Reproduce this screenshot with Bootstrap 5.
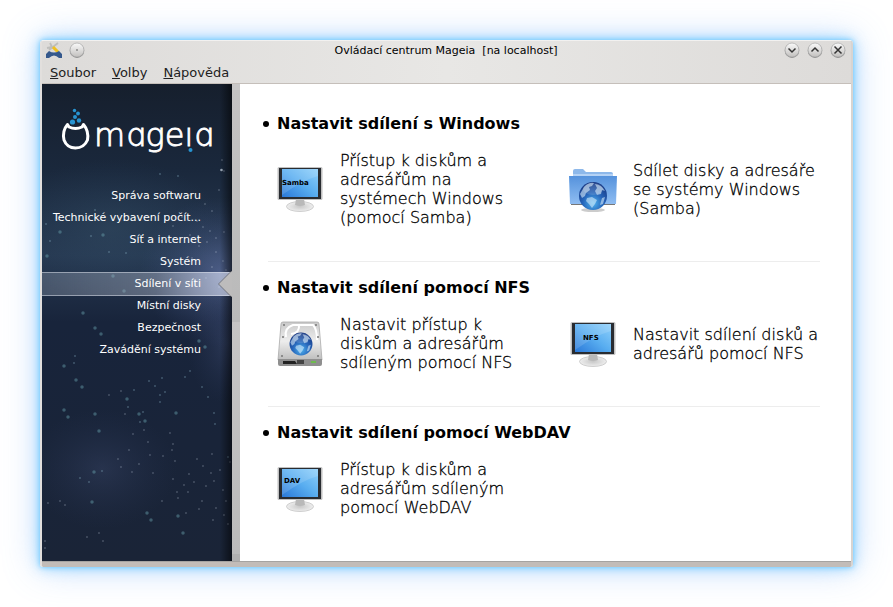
<!DOCTYPE html>
<html lang="cs">
<head>
<meta charset="utf-8">
<meta name="viewport" content="width=device-width, initial-scale=1">
<title>Ovládací centrum Mageia</title>
<link rel="stylesheet" href="https://cdn.jsdelivr.net/npm/bootstrap@5.3.0/dist/css/bootstrap.min.css">
<style>
  body { font-family: "DejaVu Sans", sans-serif; padding: 40px; color: #000; background: #fff; }
  .app-window { border-radius: 4px 4px 3px 3px; border: solid; border-width: 1px 2px 0;
    border-color: #f2f1f0 #d8d4d1 #c2bcb8 #e2dfdd;
    background: linear-gradient(#dddbd9, #e3e1df 43px, #c2bcb8);
    box-shadow: 0 0 5px #6ccaff, 0 0 14px rgba(100,195,255,.7), 0 0 36px rgba(110,170,250,.45); }
  .title-bar { height: 21px; font-size: 11px; line-height: 20px; padding: 0 5px 2px 4px; background: linear-gradient(90deg, #dddbd9, #e8e7e5 50%, #dddbd9); border-radius: 3px 3px 0 0; }
  .title-tools { width: 80px; gap: 7px; }
  .round-btn { width: 16px; height: 17px; border: 0; background: none; }
  .menu-bar { height: 22px; gap: 16px; padding: 0 8px; font-size: 13px; line-height: 20px; background: linear-gradient(90deg, #dddbd9, #e8e7e5 50%, #dddbd9); border-bottom: 1px solid #c5bfba; }
  .menu-bar button { color: #222; background: none; }
  .side-pane { width: 190px; background: #18233a; overflow: hidden; }
  .sky { z-index: 0; }
  .side-menu { padding-top: 17px; font-size: 11px; line-height: 22px; }
  .side-menu a { height: 22px; color: #fff; padding-right: 31px; }
  .side-menu a.current { height: 24px; margin: -1px 0; line-height: 22px; border: solid rgba(225,230,240,.5); border-width: 1px 0;
    background: linear-gradient(90deg, rgba(190,200,215,.25), rgba(170,178,195,.45) 60%, rgba(215,222,245,.7)); }
  .pointer { right: 0; top: -2px; }
  .logo-word { font-family: "DejaVu Sans Light", "DejaVu Sans", sans-serif; font-weight: 200; font-size: 32px; }
  .strip { width: 8px; background: linear-gradient(#c9c8c8 0 6px, #c3c2c2 6px, #bababa 238px, #c6c5c5 238px, #bababa 470px, #b0b0b0 470px); }
  .main-pane { padding: 13px 31px 0 28px; }
  .tool-group { padding: 17px 0 34px; }
  .tool-group + .tool-group { border-top: 1px solid #ededed; padding-top: 16px; }
  .tool-group h2 { font-size: 16px; line-height: 20px; font-weight: 700; margin: 0 0 17px -5px; gap: 8px; }
  .bullet { width: 6px; height: 6px; background: #000; }
  .tool-grid { display: grid; grid-template-columns: 1fr 1fr; column-gap: 42px; padding-left: 8px; }
  .tool-link { gap: 16px; color: #000; font-family: "DejaVu Sans Light", "DejaVu Sans", sans-serif; font-weight: 200; font-size: 16px; line-height: 19px; -webkit-text-stroke: .3px #000; }
  .tool-link svg { -webkit-text-stroke: 0; }
  .screen-label { font: 700 7px "DejaVu Sans", sans-serif; }
  .status-edge { height: 6px; background: #c2bcb8; border-top: 1px solid #a5a3a1; border-radius: 0 0 3px 3px; }
</style>
<script src="https://cdn.jsdelivr.net/npm/bootstrap@5.3.0/dist/js/bootstrap.bundle.min.js"></script>
</head>
<body class="min-vh-100 d-flex flex-column">
<svg width="0" height="0" class="position-absolute" aria-hidden="true">
  <defs>
    <linearGradient id="btn" x2="0" y2="1"><stop stop-color="#fafafa"/><stop offset="1" stop-color="#c2c0be"/></linearGradient>
    <linearGradient id="scr" x1="1" y1="0" x2="0" y2="1"><stop stop-color="#8fd0fb"/><stop offset=".5" stop-color="#58adf0"/><stop offset="1" stop-color="#2a78d8"/></linearGradient>
    <linearGradient id="fold" x2="0" y2="1"><stop stop-color="#5592dc"/><stop offset="1" stop-color="#8fbdf2"/></linearGradient>
    <linearGradient id="metal" x2="0" y2="1"><stop stop-color="#c9c9c9"/><stop offset=".5" stop-color="#ededed"/><stop offset="1" stop-color="#bdbdbd"/></linearGradient>
    <radialGradient id="ball" cx=".5" cy=".75" r=".75"><stop stop-color="#4fb3f0"/><stop offset=".5" stop-color="#2563b8"/><stop offset="1" stop-color="#17357f"/></radialGradient>
    <radialGradient id="foot"><stop stop-color="#c8c8c8"/><stop offset="1" stop-color="#eeeeee"/></radialGradient>
    <g id="monitor">
      <ellipse cx="24" cy="41.500" rx="13.500" ry="5" fill="url(#foot)" stroke="#c4c4c4" stroke-width=".8"/>
      <path d="M20 34h8l1 6q-5 2-10 0z" fill="#b9b9b9"/>
      <rect x="1.500" y="2" width="45" height="33" rx="1.500" fill="#c0c0c0"/>
      <rect x="3" y="3" width="42" height="31" fill="#292c31"/>
      <rect x="6" y="4" width="36" height="28" fill="url(#scr)"/>
      <path d="M42 4v7Q27 15 6 30V4z" fill="#fff" opacity=".14"/>
    </g>
    <g id="earth">
      <circle r="14" fill="url(#ball)"/>
      <path d="M-9-9Q-4-14 1-13L-1-10-4-9-3-6-7-3-8 0-11 2-13-2zM2-12Q9-11 12-5L9-6 8-2 4-1 2-5 4-8zM-6 2L-1 1 4 4 2 8-1 12-4 8-7 5zM9 2l3-1-2 7-3 1z" fill="#d5ebfa" opacity=".6"/>
      <ellipse cy="-7" rx="10" ry="6" fill="#fff" opacity=".14"/>
    </g>
    <g id="round">
      <circle cx="8" cy="8.700" r="7.200" fill="#8a8a8a"/>
      <circle cx="8" cy="8" r="7" fill="url(#btn)" stroke="#aaa" stroke-width=".7"/>
    </g>
  </defs>
</svg>

<div class="app-window flex-grow-1 d-flex flex-column">
  <header class="title-bar d-flex align-items-center justify-content-between">
    <div class="title-tools d-flex align-items-center">
      <svg width="16" height="17" viewBox="0 0 16 17" aria-hidden="true"><path d="M4 1l2 4 5 4M12 1L3 8M1 6l5-1" stroke="#bdbdbb" stroke-width="1.800" fill="none"/><path d="M7 5l5 5" stroke="#f0c020" stroke-width="3"/><path d="M0 16v-4l3-3q5 3 10 0l3 3v4h-3q-5-5-10 0z" fill="#35588c"/></svg>
      <button class="round-btn p-0 d-flex" aria-label="Nabídka okna"><svg width="16" height="17"><use href="#round"/><circle cx="8" cy="8" r=".7" fill="#333"/></svg></button>
    </div>
    <div class="text-nowrap">Ovládací centrum Mageia&nbsp; [na localhost]</div>
    <div class="title-tools d-flex justify-content-end">
      <button class="round-btn p-0 d-flex" aria-label="Minimalizovat"><svg width="16" height="17"><use href="#round"/><path d="M4.500 6.500L8 10l3.500-3.500" fill="none" stroke="#333" stroke-width="1.500"/></svg></button>
      <button class="round-btn p-0 d-flex" aria-label="Maximalizovat"><svg width="16" height="17"><use href="#round"/><path d="M4.500 9.500L8 6l3.500 3.500" fill="none" stroke="#333" stroke-width="1.500"/></svg></button>
      <button class="round-btn p-0 d-flex" aria-label="Zavřít"><svg width="16" height="17"><use href="#round"/><path d="M4.500 4.500l7 7m0-7l-7 7" fill="none" stroke="#333" stroke-width="1.500"/></svg></button>
    </div>
  </header>
  <nav class="menu-bar d-flex" aria-label="Hlavní nabídka">
    <button class="border-0 p-0"><u>S</u>oubor</button>
    <button class="border-0 p-0"><u>V</u>olby</button>
    <button class="border-0 p-0"><u>N</u>ápověda</button>
  </nav>

  <div class="flex-grow-1 d-flex">
    <aside class="side-pane flex-shrink-0 position-relative">
      <svg class="sky position-absolute top-0 start-0 w-100 h-100" viewBox="0 0 190 477" preserveAspectRatio="none" aria-hidden="true">
        <defs>
          <linearGradient id="night" x2="0" y2="1"><stop stop-color="#161f2d"/><stop offset=".18" stop-color="#1a283c"/><stop offset=".36" stop-color="#263850"/><stop offset=".5" stop-color="#18243b"/><stop offset="1" stop-color="#1a2437"/></linearGradient>
          <radialGradient id="haze"><stop stop-color="#6d7eb5" stop-opacity=".55"/><stop offset="1" stop-color="#405080" stop-opacity="0"/></radialGradient>
          <radialGradient id="mist"><stop stop-color="#3a5870" stop-opacity=".35"/><stop offset="1" stop-color="#305070" stop-opacity="0"/></radialGradient>
          <linearGradient id="edge"><stop stop-color="#000" stop-opacity="0"/><stop offset="1" stop-color="#000" stop-opacity=".55"/></linearGradient>
        </defs>
        <rect width="190" height="477" fill="url(#night)"/>
        <ellipse cx="178" cy="188" rx="80" ry="75" fill="url(#haze)"/>
        <ellipse cx="70" cy="145" rx="110" ry="70" fill="url(#mist)"/>
        <ellipse cx="60" cy="385" rx="75" ry="60" fill="url(#haze)" opacity=".3"/>
        <ellipse cx="185" cy="260" rx="40" ry="60" fill="url(#haze)" opacity=".4"/>
        <g fill="none" stroke-linecap="round">
          <path stroke="#6aa3b0" stroke-opacity=".45" stroke-width="3.500" d="M18 148h0M61 151h0M71 192h0M82 207h0M41 229h0M53 244h0M59 250h0M22 282h0M34 296h0M40 303h0M157 257h0M163 263h0M57 347h0M52 388h0M50 418h0M141 449h0M85 315h0M97 330h0M103 337h0M134 329h0M22 326h0M26 333h0M53 330h0M105 429h0M109 436h0M136 432h0M5 172h0"/>
          <path stroke="#8fb8cb" stroke-opacity=".35" stroke-width="2" d="M118 90h0M136 92h0M53 126h0M67 168h0M84 169h0M8 157h0M49 152h0M33 272h0M107 297h0M120 294h0M118 311h0M113 302h0M123 308h0M118 318h0M86 323h0M98 338h0M101 328h0M160 303h0M148 287h0M173 340h0M186 373h0M172 329h0M166 313h0M47 398h0M38 394h0M60 387h0M4 140h0M143 293h0M32 279h0M92 306h0"/>
          <path stroke="#cbd8e8" stroke-opacity=".5" stroke-width="1.400" d="M180 76h0M182 87h0M177 106h0M163 120h0M170 127h0M155 137h0M161 143h0M168 147h0M148 151h0M174 154h0M182 148h0M165 158h0M157 162h0M174 168h0M181 177h0M170 183h0M184 186h0M164 194h0M150 174h0M177 203h0M87 366h0M91 350h0M106 358h0M108 371h0M121 372h0M130 366h0M133 377h0M97 380h0M111 389h0M131 395h0M142 401h0M147 390h0M146 408h0M136 414h0M160 417h0M164 402h0M170 370h0M178 386h0M169 389h0M181 406h0M184 417h0M174 424h0M120 417h0M157 425h0M144 429h0M171 436h0M182 431h0M135 408h0M152 398h0M79 383h0M90 388h0M76 375h0M102 346h0M131 360h0M128 349h0M155 375h0M161 382h0M172 397h0M188 378h0M186 440h0M18 417h0M23 421h0M6 419h0M57 449h0M61 457h0M45 453h0M3 457h0M3 464h0M147 111h0M140 133h0M131 142h0M83 330h0M67 311h0M79 307h0"/>
          <path stroke="#d6e2ee" stroke-opacity=".7" stroke-width="2.600" d="M179.500 86h0"/>
        </g>
        <rect x="178" width="12" height="477" fill="url(#edge)"/>
      </svg>
      <div class="position-relative">
        <svg class="d-block" width="190" height="84" viewBox="0 0 190 84" role="img" aria-label="mageia">
          <path d="M25.500 40.500Q20 47 22 56 25 64 33.500 64 42 64 45.500 56 47 47 41.500 40.500L40 43Q33.500 46 27 43z" fill="none" stroke="#fff" stroke-width="3" stroke-linejoin="round"/>
          <g fill="#2794d2"><circle cx="32.500" cy="26.500" r="1.700"/><circle cx="36" cy="29.500" r="1.900"/><circle cx="33" cy="33" r="2"/><circle cx="30.500" cy="38" r="2.600"/><circle cx="37" cy="36.500" r="2.200"/><circle cx="148.500" cy="66" r="2"/></g>
          <text x="52" y="62" class="logo-word" fill="#fff" stroke="#fff" stroke-width=".9">mɑgeıɑ</text>
        </svg>
        <nav class="side-menu d-flex flex-column text-end text-nowrap" aria-label="Kategorie">
          <a class="text-decoration-none" href="#">Správa softwaru</a>
          <a class="text-decoration-none" href="#">Technické vybavení počít...</a>
          <a class="text-decoration-none" href="#">Síť a internet</a>
          <a class="text-decoration-none" href="#">Systém</a>
          <a class="text-decoration-none current position-relative" href="#" aria-current="page">Sdílení v síti<svg class="pointer position-absolute" width="15" height="26" viewBox="0 0 15 26" aria-hidden="true"><path d="M15-1L1 13l14 14" fill="#555" opacity=".6"/><path d="M15 0L2 13l13 13z" fill="#bdbcbc"/></svg></a>
          <a class="text-decoration-none" href="#">Místní disky</a>
          <a class="text-decoration-none" href="#">Bezpečnost</a>
          <a class="text-decoration-none" href="#">Zavádění systému</a>
        </nav>
      </div>
    </aside>
    <div class="strip flex-shrink-0"></div>

    <main class="main-pane flex-grow-1 bg-white">
      <section class="tool-group">
        <h2 class="d-flex align-items-center"><span class="bullet rounded-circle"></span>Nastavit sdílení s Windows</h2>
        <div class="tool-grid">
          <a href="#" class="tool-link d-flex align-items-center text-decoration-none">
            <svg class="flex-shrink-0" width="48" height="48" aria-hidden="true"><use href="#monitor"/><text class="screen-label" x="6" y="20">Samba</text></svg>
            <span>Přístup k diskům a adresářům na systémech Windows (pomocí Samba)</span></a>
          <a href="#" class="tool-link d-flex align-items-center text-decoration-none">
            <svg class="flex-shrink-0" width="48" height="48" aria-hidden="true"><ellipse cx="24" cy="45" rx="12" ry="2" fill="#ccc"/><path d="M4 14V6q0-2 2-2h8l3 3h25q2 0 2 2v5z" fill="#8db8ea"/><path d="M4 9h40v4H4z" fill="#b4d2f5"/><path d="M2 38h44v2H2z" fill="#777"/><path d="M0 11h48l-1 28H1z" fill="url(#fold)"/><use href="#earth" x="24" y="31"/></svg>
            <span>Sdílet disky a adresáře se systémy Windows (Samba)</span></a>
        </div>
      </section>
      <section class="tool-group">
        <h2 class="d-flex align-items-center"><span class="bullet rounded-circle"></span>Nastavit sdílení pomocí NFS</h2>
        <div class="tool-grid">
          <a href="#" class="tool-link d-flex align-items-center text-decoration-none">
            <svg class="flex-shrink-0" width="48" height="48" aria-hidden="true"><path d="M7 2h34q2 0 2 2l3 36H2L5 4q0-2 2-2z" fill="url(#metal)" stroke="#aaa" stroke-width=".8"/><path d="M10 17Q8 8 17 5h20q4 4 4 15M15 14q9-1 8-10" fill="none" stroke="#fff" stroke-width="2"/><path d="M2 39h44v5q0 2-2 2H4q-2 0-2-2z" fill="#8f8f8f"/><path d="M7 41h12l2 3H7z" fill="#222"/><path d="M21 40h7v4h-7z" fill="#444"/><path d="M35 42h5" stroke="#62ca38" stroke-width="1.500"/><g fill="#777"><circle cx="8" cy="5" r="1"/><circle cx="40" cy="5" r="1"/><circle cx="7" cy="17" r="1"/><circle cx="42" cy="17" r="1"/><circle cx="6" cy="36" r="1"/><circle cx="42" cy="36" r="1"/></g><use href="#earth" transform="translate(25 24) scale(.82)"/></svg>
            <span>Nastavit přístup k diskům a adresářům sdíleným pomocí NFS</span></a>
          <a href="#" class="tool-link d-flex align-items-center text-decoration-none">
            <svg class="flex-shrink-0" width="48" height="48" aria-hidden="true"><use href="#monitor"/><text class="screen-label" x="14" y="20">NFS</text></svg>
            <span>Nastavit sdílení disků a adresářů pomocí NFS</span></a>
        </div>
      </section>
      <section class="tool-group pb-0">
        <h2 class="d-flex align-items-center"><span class="bullet rounded-circle"></span>Nastavit sdílení pomocí WebDAV</h2>
        <div class="tool-grid">
          <a href="#" class="tool-link d-flex align-items-center text-decoration-none">
            <svg class="flex-shrink-0" width="48" height="48" aria-hidden="true"><use href="#monitor"/><text class="screen-label" x="8" y="18">DAV</text></svg>
            <span>Přístup k diskům a adresářům sdíleným pomocí WebDAV</span></a>
        </div>
      </section>
    </main>
  </div>
  <div class="status-edge"></div>
</div>
</body>
</html>
